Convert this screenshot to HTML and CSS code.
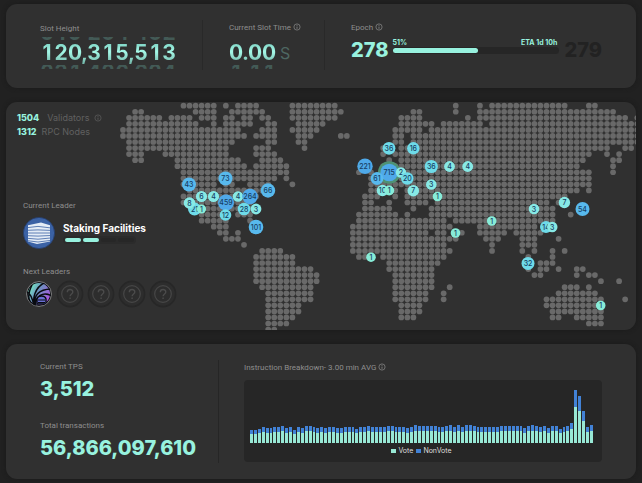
FILE: index.html
```html
<!DOCTYPE html>
<html lang="en">
<head>
<meta charset="utf-8">
<title>Network Dashboard</title>
<link rel="stylesheet" href="styles.css">
</head>
<body>
<svg class="defs" aria-hidden="true">
  <symbol id="info" viewBox="0 0 8 8"><circle cx="4" cy="4" r="3.1" fill="none" stroke="currentColor" stroke-width=".7"/><path d="M4 3.6V5.8M4 2.1V2.9" stroke="currentColor" stroke-width=".8"/></symbol>
  <symbol id="unknown" viewBox="0 0 28 28"><circle cx="14" cy="14" r="12.6" fill="#2d2d2d" stroke="#272727" stroke-width="1.6"/><circle cx="14" cy="14" r="8.3" fill="none" stroke="#474747" stroke-width="1.2"/><path d="M11.3 12.2C11.3 8.6 16.8 8.7 16.8 12C16.8 13.9 14.1 14 14.1 16.2M14.1 17.6V19" fill="none" stroke="#4b4b4b" stroke-width="1.4"/></symbol>
</svg>
<main class="page">
  <section class="card summary">
    <div class="stat">
      <h2 class="label slot-label">Slot Height</h2>
      <div class="odometer" id="slot"></div>
    </div>
    <div class="stat ruled">
      <h2 class="label">Current Slot Time <svg class="info"><use href="#info"/></svg></h2>
      <div class="slot-time"><div class="odometer" id="time"></div><span class="unit">S</span></div>
    </div>
    <div class="stat ruled epoch">
      <h2 class="label">Epoch <svg class="info"><use href="#info"/></svg></h2>
      <div class="epoch-row">
        <strong class="value">278</strong>
        <div class="progress">
          <div class="progress-text"><span>51%</span><span>ETA 1d 10h</span></div>
          <div class="track"><div class="fill"></div></div>
        </div>
        <strong class="value next">279</strong>
      </div>
    </div>
  </section>

  <section class="card world">
    <svg class="map" viewBox="0 0 630 228" role="img" aria-label="Validator map"><g id="land"></g><g id="nodes"></g></svg>
    <div class="overlay">
      <div class="counts">
        <p><strong>1504</strong><span class="wide">Validators</span><svg class="info"><use href="#info"/></svg></p>
        <p><strong>1312</strong><span>RPC Nodes</span></p>
      </div>
      <div class="leaders">
        <h2 class="label">Current Leader</h2>
        <div class="leader">
          <svg class="avatar" viewBox="0 0 32 32" aria-hidden="true">
            <circle cx="16" cy="16" r="15.6" fill="#3b62a5" stroke="#263d6c" stroke-width=".8"/>
            <path d="M5 8.2L18 5.4L27 8.2V24.5L14 27L5 24.5Z" fill="#e4ecf6"/>
            <path d="M4.5 10.6L15 9.4L27.5 10.9M4.5 13.3L15 12.9L27.5 13.4M4.5 16H27.5M4.5 18.7L15 19.1L27.5 18.5M4.5 21.3L15 22.2L27.5 21M4.5 23.7L15 25L27.5 23.4" fill="none" stroke="#3b62a5" stroke-width=".8"/>
          </svg>
          <div>
            <strong class="name">Staking Facilities</strong>
            <div class="steps"><i class="on"></i><i class="on"></i><i></i><i></i></div>
          </div>
        </div>
        <h2 class="label">Next Leaders</h2>
        <div class="queue">
          <svg viewBox="0 0 28 28" aria-hidden="true">
            <defs>
              <linearGradient id="shell" x1="0" x2="1" y1=".2" y2=".8"><stop offset="0" stop-color="#77f6c4"/><stop offset=".42" stop-color="#6d91bf"/><stop offset="1" stop-color="#b34de4"/></linearGradient>
              <clipPath id="round"><circle cx="14" cy="14" r="12"/></clipPath>
            </defs>
            <circle cx="14" cy="14" r="12.4" fill="#080a10" stroke="#a0a0a0" stroke-width=".8"/>
            <g clip-path="url(#round)">
              <circle cx="14" cy="14" r="11" fill="url(#shell)"/>
              <path d="M10 27C7 20 9 7 21 2M10 27C8 15 14 9 27 9M10 27C10 16 18 11 27 16M9 27C8 20 6 14 2 12M9 26C3 22 2 15 7 5" fill="none" stroke="#080a10" stroke-width="1.5"/>
              <path d="M12 24V19C13 15 20 15 21 19V24Z" fill="#6a70d4" stroke="#080a10" stroke-width="1.4"/>
              <path d="M13 20H20M13 22.5H20" stroke="#080a10"/>
            </g>
          </svg>
          <svg><use href="#unknown"/></svg>
          <svg><use href="#unknown"/></svg>
          <svg><use href="#unknown"/></svg>
          <svg><use href="#unknown"/></svg>
        </div>
      </div>
    </div>
  </section>

  <section class="card activity">
    <div class="totals">
      <h2 class="label">Current TPS</h2>
      <strong class="value">3,512</strong>
      <h2 class="label">Total transactions</h2>
      <strong class="value">56,866,097,610</strong>
    </div>
    <div class="breakdown">
      <h2 class="label">Instruction Breakdown- 3.00 min AVG <svg class="info"><use href="#info"/></svg></h2>
      <div class="chart">
        <div class="bars" id="bars"></div>
        <div class="legend"><span class="vote">Vote</span><span class="nonvote">NonVote</span></div>
      </div>
    </div>
  </section>
</main>
<script src="app.js"></script>
</body>
</html>
```
FILE: styles.css
```css
* { box-sizing: border-box; margin: 0; }
body { background: #212121; font-family: Inter, "Liberation Sans", sans-serif; color: #8a8a8a; font-size: 8px; }
.defs { position: absolute; width: 0; height: 0; }
.page { display: flex; flex-direction: column; gap: 14px; padding: 4px 6px; }
.card { background: #303030; border-radius: 11px; box-shadow: 0 0 4px #1a1a1a; overflow: hidden; }
.label { font-family: Roboto, "Liberation Sans", sans-serif; font-size: 8px; line-height: 10px; font-weight: 400; color: #8e8e8e; white-space: nowrap; }
.info { width: 8px; height: 8px; vertical-align: -1px; }
.value { display: block; font-size: 20px; line-height: 24px; font-weight: 800; color: #98f2df; }

.summary { display: flex; padding: 16px 34px 18px; }
.stat { padding-top: 3px; height: 50px; }
.stat:first-child { width: 162px; }
.ruled { width: 122px; padding-left: 26px; border-left: 1px solid #292929; }
.slot-label { padding-top: 1px; }
.epoch { flex: 1; padding-left: 26px; }

.odometer { display: flex; width: max-content; height: 32px; overflow: hidden; font-size: 21px; font-weight: 700; }
.slot-label + .odometer { margin-top: 3px; }
.reel { display: flex; flex-direction: column; align-items: center; width: 14px; }
.reel.mark { width: 5px; }
.reel span { display: flex; justify-content: center; height: 24px; line-height: 24px; background: linear-gradient(#76cbbc, #a5f8e7 45%, #6dafa2); background-clip: text; color: transparent; }
.reel .ghost { height: 4px; overflow: hidden; background: none; color: #435a56; line-height: 16px; }
.reel .before { align-items: flex-end; }
.reel .after { align-items: flex-start; }
.slot-time { display: flex; align-items: center; gap: 4px; margin-top: 4px; }
.unit { font-size: 16px; color: #4e6762; }

.epoch-row { display: flex; align-items: center; margin-top: 5px; }
.progress { flex: 1; max-width: 169px; margin: 0 5px 8px 4px; }
.progress-text { display: flex; justify-content: space-between; padding-right: 2px; font-size: 7px; line-height: 8px; font-weight: 700; color: #98f2df; }
.track { height: 7px; padding: 1px 0; border-radius: 4px; background: #262626; }
.fill { width: 51%; height: 5px; border-radius: 3px; background: #98f2df; }
.next { color: #222; }

.world { display: grid; }
.map, .overlay { grid-area: 1 / 1; }
.map { display: block; width: 100%; }
.land { fill: #696969; }
.node { font-size: 7px; font-weight: 500; text-anchor: middle; fill: #174064; }
.overlay { z-index: 1; padding: 9px 11px; }
.counts { font-size: 9px; line-height: 14px; color: #606060; }
.counts p { display: flex; align-items: center; gap: 5px; height: 14px; }
.counts strong { color: #98f2df; font-weight: 800; }
.counts .wide { padding-left: 3px; }
.leaders { padding: 62px 6px 0; }
.leader { display: flex; align-items: center; gap: 8px; margin: 6px 0 18px; }
.avatar { width: 32px; height: 32px; }
.name { display: block; font-size: 10px; line-height: 12px; color: #fff; }
.steps { display: flex; gap: 2px; width: 73px; margin: 2px 0 0; padding: 2px; border-radius: 4px; background: #2b2b2b; }
.steps i { flex: 1; height: 4px; border-radius: 2px; background: #272727; }
.steps .on { background: #98f2df; }
.queue { display: flex; gap: 3px; margin: 3px 0 0 2px; }
.queue svg { width: 28px; height: 28px; }

.activity { display: flex; padding: 16px 34px; }
.totals { width: 179px; height: 103px; padding-top: 2px; border-right: 1px solid #262626; }
.totals .value { margin: 5px 0 20px; }
.totals .value:last-child { margin: 5px 0 0; }
.breakdown { flex: 1; padding: 3px 0 0 25px; }
.chart { display: flex; flex-direction: column; justify-content: flex-end; height: 82px; margin-top: 7px; padding: 6px 9px 6px 6px; border-radius: 4px; background: #262626; }
.bars { display: flex; align-items: flex-end; gap: 1px; height: 56px; }
.bar { flex: 1; display: flex; flex-direction: column; background: #98e8d5; }
.bar i { background: #4282d6; }
.legend { display: flex; justify-content: center; gap: 3px; height: 13px; padding-top: 3px; font-size: 7px; line-height: 10px; color: #ddd; }
.legend span { display: flex; align-items: center; gap: 2px; }
.legend span::before { content: ""; width: 5px; height: 4px; background: #98e8d5; }
.legend .nonvote::before { background: #4282d6; }
```
FILE: app.js
```js
// Each reel shows the previous and next digit partly cut off.
function reels(id, text, showBefore) {
  document.getElementById(id).innerHTML = [...text].map(ch => {
    if (!/\d/.test(ch)) return `<div class="reel mark"><span class="ghost before"></span><span>${ch}</span></div>`;
    const before = showBefore ? (+ch + 9) % 10 : "";
    return `<div class="reel"><span class="ghost before" aria-hidden="true">${before}</span><span>${ch}</span><span class="ghost after" aria-hidden="true">${(+ch + 1) % 10}</span></div>`;
  }).join("");
}
reels("slot", "120,315,513", true);
reels("time", "0.00", false);

// Column ranges of land for each row of the dot grid.
const land = [
  "10-15 17 19-22 28-35 55 59 61-73 77-78",
  "2-3 12-15 18-23 28-36 48-49 55 59-81",
  "1-6 8-11 13-15 17-18 20-21 23-24 28-35 46-49 57 59-83 85",
  "1-12 15 17-21 24-25 29-33 46-51 53-59 61-85",
  "0-19 23-25 28-32 45-49 51-85",
  "0-20 22-25 29-31 36-37 45-46 48-85",
  "1-18 24-25 29-30 45-46 48-85",
  "1-17 22-24 30 43 46-80 83-84",
  "1-3 7-17 22-25 43 45-77 80 82",
  "2-3 9-19 23-26 44 46-76 81-82",
  "9-20 22-27 40 43-75 81",
  "10-27 39 41 43-77 81",
  "10-25 27 41-77",
  "10-15 17-18 21-24 28 41-77",
  "11-24 41-45 47-75 77",
  "10-22 40-42 45 47-51 53-73",
  "10-21 40-41 44 47-50 52-70 72",
  "12-21 40-44 48 51-71",
  "13-17 19-21 39-45 47 51-71 74",
  "13-17 21 39-53 55-71",
  "15-17 38-54 59-68 70-71",
  "16-17 19 38-50 52-53 56 59-63 65-69",
  "17-19 38-55 60-62 66-68 72",
  "20 38-53 61 66-68",
  "23-26 38-54 61 66 68 71 73",
  "22-28 39-41 43-53 67 71",
  "22-28 44-52 69-71",
  "22-31 44-51 67 69-70 72 75-76",
  "22-32 45-51 68-69 75 77-78",
  "22-32 45-51 79 82",
  "23-31 45-51 54 73-75 77",
  "24-31 45-50 53 72-78",
  "24-31 45-50 53 70-79 83",
  "24-29 46-49 70-79",
  "24-29 46-49 71-79",
  "24-28 46-48 71-72 75-79",
  "24-27 77-79",
  "24-25"
];
const step = 6.05;
let dots = "";
land.forEach((row, r) => row.split(" ").forEach(range => {
  const [from, to = from] = range.split("-").map(Number);
  for (let c = from; c <= to; c++)
    dots += `<circle class="land" cx="${(117 + c * step).toFixed(2)}" cy="${(3.7 + r * step).toFixed(2)}" r="2.85"/>`;
}));
document.getElementById("land").innerHTML = dots;

// x, y, radius, count
const nodes = [
  [183,82.5,7,43],[219.5,76.5,7,73],[188.5,107,6.5,21],[183.5,101,5.8,8],[195.5,107,4.6,1],
  [195.5,94.5,5.6,6],[207.5,94.5,5.6,4],[220,100.5,8,459],[232,94.5,5.3,4],[244,94.5,7.8,264],
  [262,88.5,7.2,66],[238,107,6.3,28],[250,107,5.4,3],[219.5,113,5.8,12],[250,125,7.3,101],
  [383,46.3,6.4,36],[407.3,46.3,6.2,16],[359,64.3,7.7,221],[383.2,70.5,8.8,715],[371,76.5,6.4,61],
  [395,70.5,5.2,2],[401.3,76.5,6.2,20],[425.3,64.5,6.6,36],[443.5,64.5,5.4,4],[461.7,64.5,5.4,4],
  [376.5,88.5,5.8,10],[383.2,88.5,5,1],[407.3,88.7,5.8,7],[425.3,82.5,5.3,3],[431.5,94.5,4.8,1],
  [449.5,131,4.8,1],[365,155.2,4.8,1],[485.7,119,4.8,1],[528,107,5.3,3],[558.4,100.5,5.7,7],
  [576.5,107,7,54],[540,125,6,14],[546.3,125,5.2,3],[522,161.4,6.5,32],[594.7,203.5,4.8,1]
];
function shade(n) {
  if (n > 200) return "#4fa9e9";
  if (n > 40) return "#58b9ed";
  if (n > 10) return "#6edbe9";
  return n === 1 ? "#87ecd8" : "#87e9e5";
}
document.getElementById("nodes").innerHTML = nodes.map(([x, y, r, n]) =>
  (n === 715 ? `<circle cx="${x}" cy="${y}" r="11.3" fill="#4f9274"/>` : "") +
  `<circle cx="${x}" cy="${y}" r="${r}" fill="${shade(n)}"/><text class="node" x="${x}" y="${y + 2.5}">${n}</text>`
).join("");

// Transactions per interval: total height, in thirds of a pixel.
const totals = [39,39,43,48,45,45,48,48,50,46,48,39,48,45,51,51,48,46,
  48,45,48,49,45,45,49,48,49,42,48,49,51,48,48,48,48,50,51,48,48,48,45,48,55,51,51,51,51,51,49,48,51,54,48,
  53,49,54,54,51,48,49,48,47,48,48,50,51,51,51,51,51,45,51,54,51,48,51,46,50,51,42,48,51,59,
  159,141,96,48,54];
document.getElementById("bars").innerHTML = totals.map(t => {
  const h = Math.round(t / 3);
  return `<div class="bar" style="height:${h}px"><i style="height:${Math.round(h * .32)}px"></i></div>`;
}).join("");
```
